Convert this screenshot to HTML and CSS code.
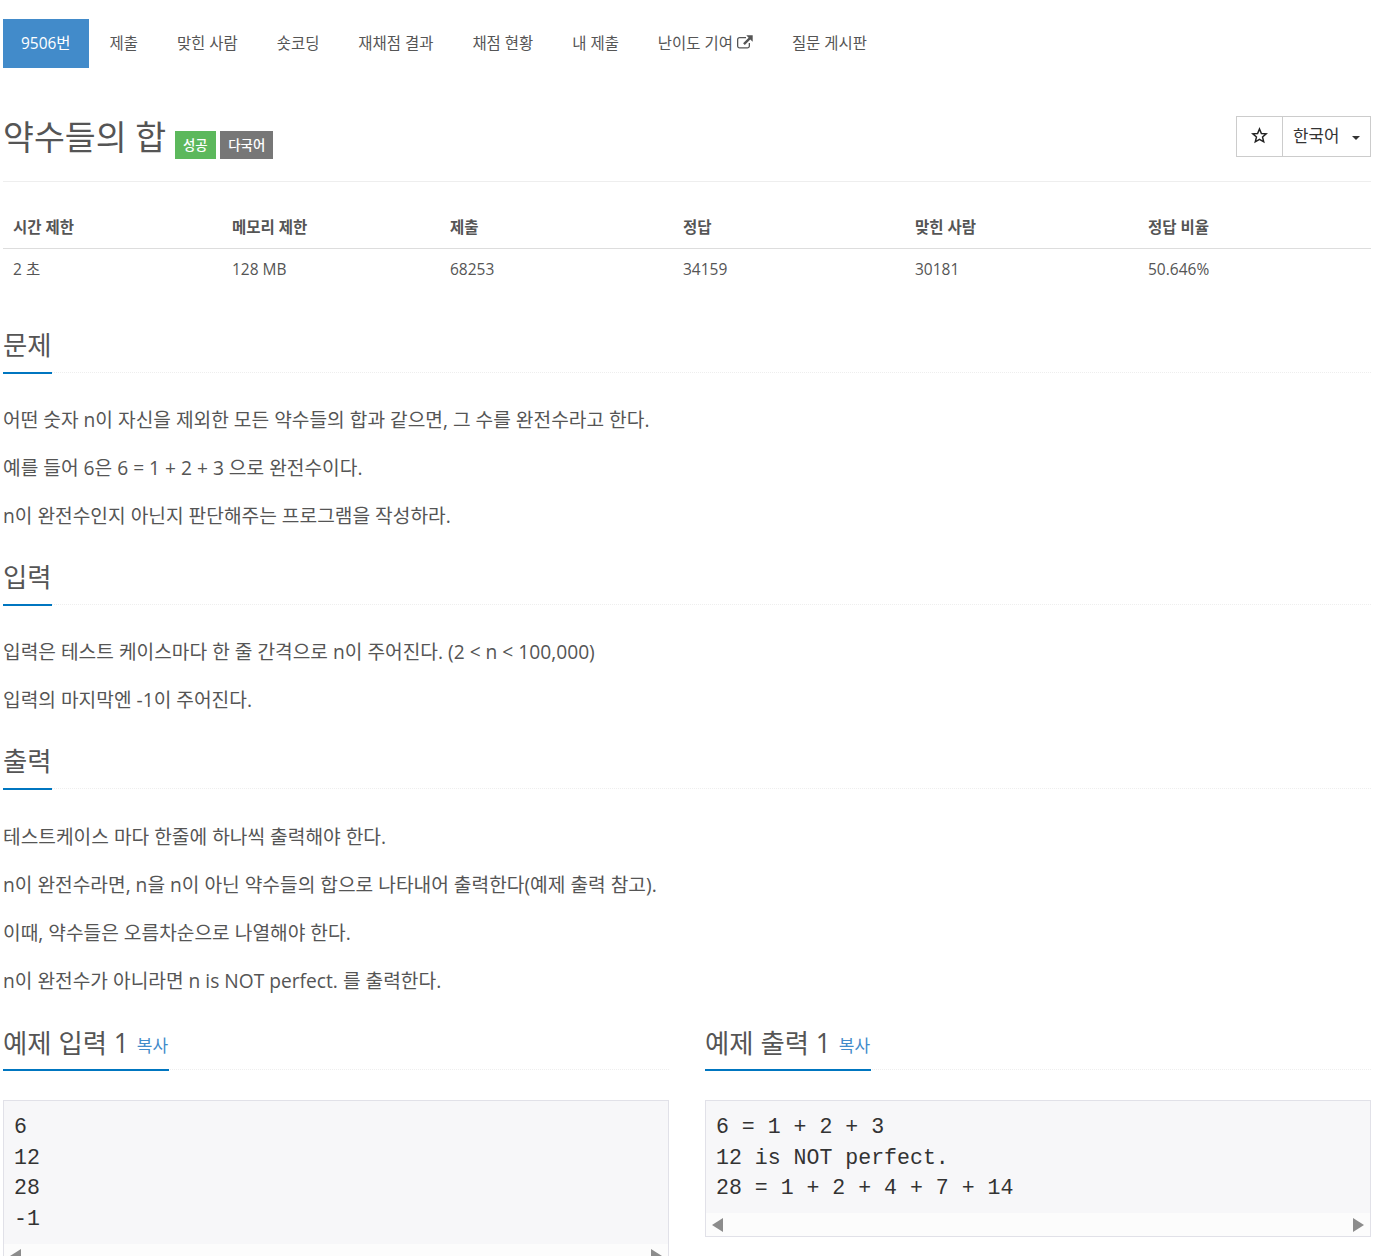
FILE: index.html
```html
<!DOCTYPE html>
<html lang="ko">
<head>
<meta charset="utf-8">
<title>약수들의 합</title>
<link rel="stylesheet" href="styles.css">
</head>
<body>
<div class="page">
  <nav class="tabs">
    <a class="tab active">9506번</a>
    <a class="tab">제출</a>
    <a class="tab">맞힌 사람</a>
    <a class="tab">숏코딩</a>
    <a class="tab">재채점 결과</a>
    <a class="tab">채점 현황</a>
    <a class="tab">내 제출</a>
    <a class="tab">난이도 기여 <svg class="ext" viewBox="0 0 16 14" width="16" height="14"><path d="M2.6 1.9h6.4v1.3H2.6c-.7 0-1.3.6-1.3 1.3v6.4c0 .7.6 1.3 1.3 1.3h7.8c.7 0 1.3-.6 1.3-1.3V8h1.3v3c0 1.4-1.200 2.500-2.600 2.500H2.600C1.200 13.500 0 12.400 0 11V4.500C0 3.100 1.200 1.900 2.600 1.900z" fill="#555"/><path d="M9.300.3H15.700V6.700L13.300 4.400 7.800 9.900 6.100 8.200 11.600 2.700z" fill="#555"/></svg></a>
    <a class="tab">질문 게시판</a>
  </nav>

  <header class="page-header">
    <h1 class="title">약수들의 합 <span class="badge green">성공</span> <span class="badge gray">다국어</span></h1>
    <div class="tools">
      <button class="tool star"><svg viewBox="0 0 24 24" width="17" height="17"><path d="M12 2.800l2.700 6.300 6.800.6-5.200 4.500 1.600 6.700L12 17.300l-5.900 3.600 1.600-6.700-5.200-4.500 6.800-.6z" fill="none" stroke="#222" stroke-width="2.100" stroke-linejoin="miter"/></svg></button>
      <button class="tool lang">한국어<span class="caret"></span></button>
    </div>
  </header>

  <table class="info">
    <colgroup>
      <col class="c1"><col class="c2"><col class="c3"><col class="c4"><col class="c5"><col class="c6">
    </colgroup>
    <thead>
      <tr><th>시간 제한</th><th>메모리 제한</th><th>제출</th><th>정답</th><th>맞힌 사람</th><th>정답 비율</th></tr>
    </thead>
    <tbody>
      <tr><td>2 초</td><td>128 MB</td><td>68253</td><td>34159</td><td>30181</td><td>50.646%</td></tr>
    </tbody>
  </table>

  <section class="section">
    <div class="headline"><h2><span class="hl">문제</span></h2></div>
    <p>어떤 숫자 n이 자신을 제외한 모든 약수들의 합과 같으면, 그 수를 완전수라고 한다.</p>
    <p>예를 들어 6은 6 = 1 + 2 + 3 으로 완전수이다.</p>
    <p>n이 완전수인지 아닌지 판단해주는 프로그램을 작성하라.</p>
  </section>

  <section class="section">
    <div class="headline"><h2><span class="hl">입력</span></h2></div>
    <p>입력은 테스트 케이스마다 한 줄 간격으로 n이 주어진다. (2 &lt; n &lt; 100,000)</p>
    <p>입력의 마지막엔 -1이 주어진다.</p>
  </section>

  <section class="section">
    <div class="headline"><h2><span class="hl">출력</span></h2></div>
    <p>테스트케이스 마다 한줄에 하나씩 출력해야 한다.</p>
    <p>n이 완전수라면, n을 n이 아닌 약수들의 합으로 나타내어 출력한다(예제 출력 참고).</p>
    <p>이때, 약수들은 오름차순으로 나열해야 한다.</p>
    <p>n이 완전수가 아니라면 n is NOT perfect. 를 출력한다.</p>
  </section>

  <div class="samples">
    <section class="sample">
      <div class="headline"><h2><span class="hl">예제 입력 1 <a class="copy">복사</a></span></h2></div>
      <div class="data">
        <pre>6
12
28
-1</pre>
        <div class="hscroll"><span class="arrow left"></span><span class="arrow right"></span></div>
      </div>
    </section>
    <section class="sample">
      <div class="headline"><h2><span class="hl">예제 출력 1 <a class="copy">복사</a></span></h2></div>
      <div class="data">
        <pre>6 = 1 + 2 + 3
12 is NOT perfect.
28 = 1 + 2 + 4 + 7 + 14</pre>
        <div class="hscroll"><span class="arrow left"></span><span class="arrow right"></span></div>
      </div>
    </section>
  </div>
</div>
</body>
</html>
```

FILE: styles.css
```css
* { box-sizing: border-box; }
html, body { margin: 0; height: 1256px; overflow: hidden; background: #fff; }
body {
  font-family: "Open Sans", "Noto Sans CJK KR", sans-serif;
  color: #555;
  font-size: 15.5px;
}
.page { width: 1368px; margin-left: 3px; padding-top: 19px; }

.tabs { display: flex; height: 49px; gap: 3px; }
.tab {
  display: flex; align-items: center; gap: 4px;
  padding: 0 18px 2px; color: #555; font-size: 15.45px; white-space: nowrap;
}
.tab.active { background: #428bca; color: #fff; }
.ext { display: block; margin-top: -2px; }

.page-header {
  display: flex; justify-content: space-between; align-items: flex-start;
  height: 114px; padding-top: 48px; border-bottom: 1px solid #eee;
}
.title { margin: 0; font-size: 33.6px; font-weight: 400; line-height: 42px; color: #555; }
.badge {
  display: inline-block; vertical-align: 0; color: #fff;
  font-size: 13.4px; font-weight: 500; line-height: 28px; height: 28px; padding: 0 8px;
}
.green { background: #5cb85c; }
.gray { background: #777; margin-left: -4px; }
.tools { display: flex; }
.tool {
  height: 41px; background: #fff; border: 1px solid #ccc; font: inherit; color: #333; font-size: 16.8px; padding: 0 0 4px;
  display: flex; align-items: center; justify-content: center;
}
.star { width: 47px; padding-bottom: 2px; }
.lang { width: 89px; margin-left: -1px; justify-content: flex-start; padding-left: 10px; }
.caret {
  width: 0; height: 0; margin-left: 13px; margin-top: 6px;
  border-top: 4px solid #333; border-left: 4px solid transparent; border-right: 4px solid transparent;
}

.info { width: 100%; table-layout: fixed; border-collapse: collapse; margin-top: 23px; color: #555; }
.c1 { width: 219px; } .c2 { width: 218px; } .c3 { width: 233px; }
.c4 { width: 232px; } .c5 { width: 233px; } .c6 { width: 233px; }
.info th { text-align: left; font-weight: 700; padding: 10px; height: 43px; border-bottom: 1px solid #ddd; }
.info td { padding: 10px; height: 41px; line-height: 20px; }

.headline { border-bottom: 1px dotted #eee; height: 49px; margin-top: 16px; }
.info + .section .headline { margin-top: 34px; }
.headline h2 { margin: 0; font-size: 26.4px; font-weight: 400; line-height: 32px; height: 49px; }
.hl { display: inline-block; height: 50px; padding-top: 5px; border-bottom: 2px solid #0076c0; color: #555; }
.sample .hl { padding-top: 6px; padding-right: 1px; }
.section p { margin: 0; font-size: 19.2px; line-height: 30px; padding-top: 9px; padding-bottom: 9px; color: #555; }
.section .headline + p { margin-top: 23.35px; }

.samples { display: grid; grid-template-columns: 666px 666px; column-gap: 36px; margin-top: .3px; }
.copy { font-size: 17px; color: #428bca; margin-left: 1px; vertical-align: 1px; }
.data { margin-top: 30px; border: 1px solid #e1e1e8; background: #f7f7f9; }
.data pre {
  margin: 0; padding: 11.2px 10px 8.8px;
  font-family: "Liberation Mono", monospace; font-size: 21.55px; line-height: 30.7px; color: #333;
}
.hscroll { height: 23px; background: #fcfcfc; display: flex; justify-content: space-between; align-items: center; padding: 1px 6px 0; }
.arrow { width: 0; height: 0; border-top: 7px solid transparent; border-bottom: 7px solid transparent; }
.left { border-right: 11px solid #8c8c8c; }
.right { border-left: 11px solid #8c8c8c; }
```
